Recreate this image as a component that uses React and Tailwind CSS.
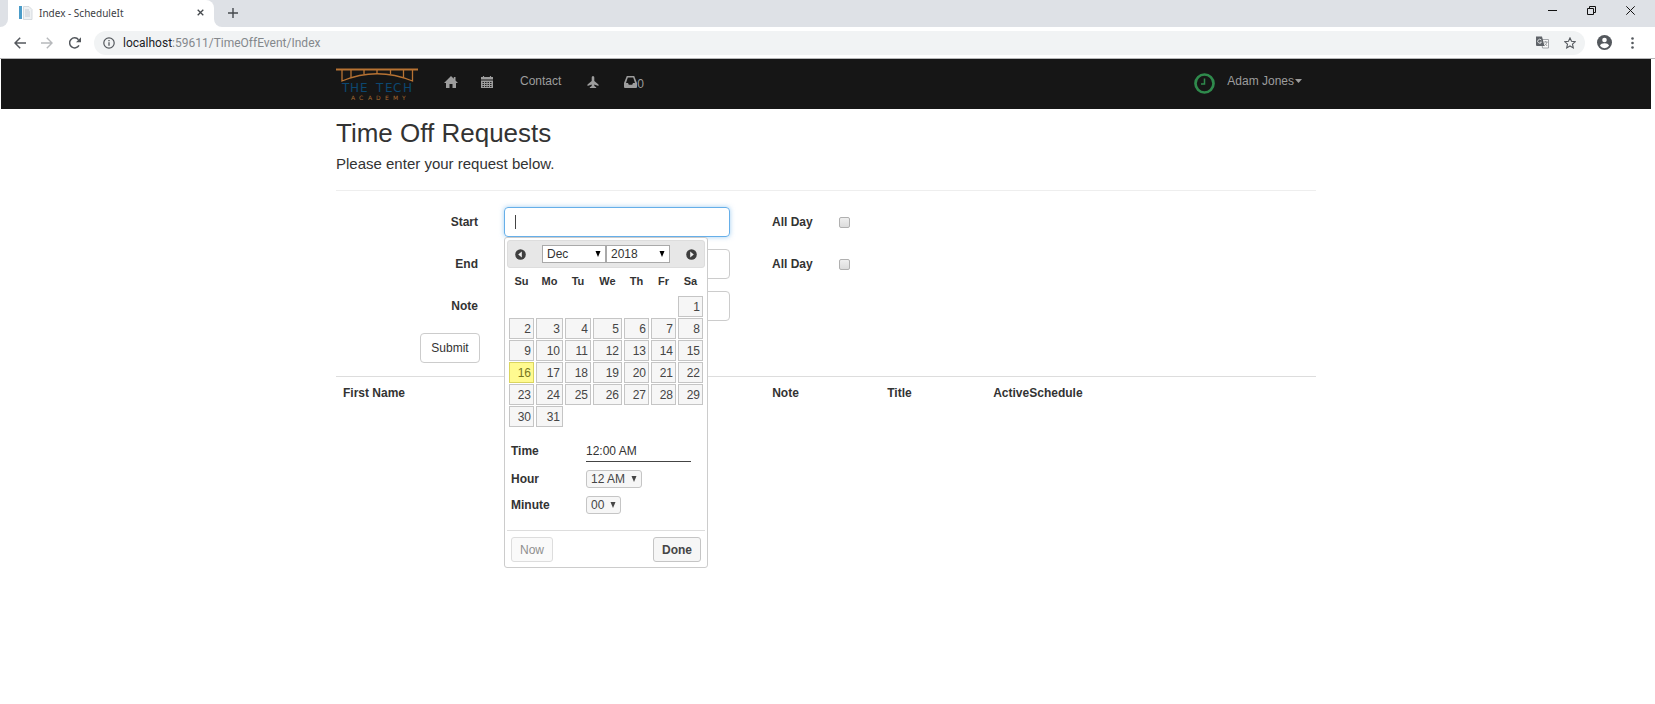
import React from "react";

const DAYS = ["Su", "Mo", "Tu", "We", "Th", "Fr", "Sa"];
const WEEKS = [
  [0, 0, 0, 0, 0, 0, 1],
  [2, 3, 4, 5, 6, 7, 8],
  [9, 10, 11, 12, 13, 14, 15],
  [16, 17, 18, 19, 20, 21, 22],
  [23, 24, 25, 26, 27, 28, 29],
  [30, 31, 0, 0, 0, 0, 0],
];

function Favicon() {
  return (
    <svg viewBox="0 0 14 14" className="size-[14px] shrink-0">
      <rect x="0" y="0" width="3" height="13" fill="#4a9cc9" />
      <path d="M4.5 0.5h5.5l3 3v10H4.5z" fill="#eef1f3" stroke="#cdd3d8" strokeWidth="0.8" />
      <path d="M6 4h4M6 6h5M6 8h5M6 10h5" stroke="#b8c2ca" strokeWidth="0.8" />
    </svg>
  );
}

function TabStrip() {
  return (
    <div className="flex h-[27px] bg-[#dee1e6] text-[#3c4043]">
      <div className="flex w-[8px] items-end bg-white">
        <div className="h-full w-full rounded-br-lg bg-[#dee1e6]" />
      </div>
      <div className="flex w-[206px] items-center rounded-tr-lg bg-white pr-[8px] pb-[2px] pl-[11px]">
        <Favicon />
        <span className="ml-[6px] grow whitespace-nowrap font-['Noto_Sans',sans-serif] text-[10px]">Index - ScheduleIt</span>
        <button type="button" aria-label="Close tab" className="flex size-[12px] items-center justify-center">
          <svg viewBox="0 0 8 8" className="size-[7px]" fill="none" stroke="#45494d" strokeWidth="1.5">
            <path d="M0.8 0.8l6.4 6.4M7.2 0.8L0.8 7.2" />
          </svg>
        </button>
      </div>
      <div className="flex w-[9px] items-end bg-white">
        <div className="h-full w-full rounded-bl-lg bg-[#dee1e6]" />
      </div>
      <button type="button" aria-label="New tab" className="ml-[5px] flex w-[10px] items-center justify-center pb-[2px]">
        <svg viewBox="0 0 10 10" className="size-[10px]" fill="none" stroke="#45494d" strokeWidth="1.4">
          <path d="M5 0v10M0 5h10" />
        </svg>
      </button>
      <div className="ml-auto flex gap-[30px] pr-[20px] pb-[7px]">
        <button type="button" aria-label="Minimize" className="flex items-center">
          <svg viewBox="0 0 9 9" className="size-[9px]" stroke="#111" strokeWidth="1">
            <path d="M0 4.5h9" />
          </svg>
        </button>
        <button type="button" aria-label="Restore" className="flex items-center">
          <svg viewBox="0 0 9 9" className="size-[9px]" fill="none" stroke="#111" strokeWidth="1">
            <path d="M0.5 2.5h6v6h-6zM2.5 2.5v-2h6v6h-2" />
          </svg>
        </button>
        <button type="button" aria-label="Close" className="flex items-center">
          <svg viewBox="0 0 9 9" className="size-[9px]" fill="none" stroke="#111" strokeWidth="1">
            <path d="M0.3 0.3l8.4 8.4M8.7 0.3L0.3 8.7" />
          </svg>
        </button>
      </div>
    </div>
  );
}

function Toolbar() {
  return (
    <div className="flex h-[32px] items-center border-b border-[#b5b5b7] bg-white pr-[21px] pl-[14px]">
      <button type="button" aria-label="Back">
        <svg viewBox="0 0 12 12" className="size-[12px]" fill="none" stroke="#54585d" strokeWidth="1.5">
          <path d="M12 6H1M6.2 0.8L1 6l5.2 5.2" />
        </svg>
      </button>
      <button type="button" aria-label="Forward" className="ml-[15px]">
        <svg viewBox="0 0 12 12" className="size-[12px]" fill="none" stroke="#b7b9bc" strokeWidth="1.4">
          <path d="M0 6h11M5.8 0.8L11 6l-5.2 5.2" />
        </svg>
      </button>
      <button type="button" aria-label="Reload" className="ml-[16px]">
        <svg viewBox="0 0 12 12" className="size-[12px]">
          <path d="M10 8.3A5 5 0 1 1 9.5 2.7" fill="none" stroke="#54585d" strokeWidth="1.5" />
          <path d="M12 0.2v5H7z" fill="#54585d" />
        </svg>
      </button>
      <div className="ml-[13px] flex h-[24px] grow items-center rounded-full bg-[#f1f3f4] pr-[9px] pl-[9px]">
        <svg viewBox="0 0 12 12" className="size-[12px] shrink-0" fill="none" stroke="#54585d">
          <circle cx="6" cy="6" r="5.2" strokeWidth="1.2" />
          <path d="M6 5.3v3.5M6 3v1.3" strokeWidth="1.3" />
        </svg>
        <p className="ml-[8px] grow font-[Roboto,sans-serif] text-[12px] leading-4 text-[#84888c]">
          <span className="text-[#202124]">localhost</span>:59611/TimeOffEvent/Index
        </p>
        <button type="button" aria-label="Translate this page">
          <svg viewBox="0 0 13 13" className="size-[13px]">
            <path d="M5.5 3.5h7v8.5h-6z" fill="#fafafa" stroke="#9a9da0" strokeWidth="0.9" />
            <path d="M0 0.5h6l2.5 9.5H1a1 1 0 0 1-1-1z" fill="#5f6368" />
            <path d="M5.3 4a2 2 0 1 0 0.2 2.2H3.8" fill="none" stroke="#e6e8ea" strokeWidth="0.9" />
            <path d="M7.7 6h4M9.7 5v1M11 6c-.4 2-1.8 3.2-2.8 3.8M8.8 7.5l2.4 2.5" fill="none" stroke="#84888c" strokeWidth="0.8" />
          </svg>
        </button>
        <button type="button" aria-label="Bookmark this page" className="ml-[15px]">
          <svg viewBox="0 0 12 12" className="size-[12px]" fill="none" stroke="#54585d" strokeWidth="1.1">
            <path d="M6 0.9l1.5 3.4 3.8.4-2.8 2.5.8 3.7L6 9l-3.3 1.9.8-3.7L.7 4.7l3.8-.4z" />
          </svg>
        </button>
      </div>
      <button type="button" aria-label="Profile" className="ml-[12px]">
        <svg viewBox="0 0 15 15" className="size-[15px]">
          <circle cx="7.5" cy="7.5" r="7.5" fill="#54585d" />
          <circle cx="7.5" cy="5" r="2.3" fill="#fff" />
          <path d="M3 10.8c0-1.7 2.8-2.5 4.5-2.5s4.5.8 4.5 2.5a5.5 5.5 0 0 1-9 0z" fill="#fff" />
        </svg>
      </button>
      <button type="button" aria-label="Menu" className="ml-[19px]">
        <svg viewBox="0 0 3 12" className="h-[12px] w-[3px]" fill="#54585d">
          <circle cx="1.5" cy="1.5" r="1.3" />
          <circle cx="1.5" cy="6" r="1.3" />
          <circle cx="1.5" cy="10.5" r="1.3" />
        </svg>
      </button>
    </div>
  );
}

function Logo() {
  return (
    <svg viewBox="0 0 82 33" className="h-[33px] w-[82px]" role="img" aria-label="The Tech Academy">
      <g fill="none" stroke="#b87333" strokeWidth="1.3">
        <path d="M0 1.5h82" strokeWidth="1.8" />
        <path d="M6 1.5v11.5Q41 -1.5 76.5 13V1.5" />
        <path d="M15 1.5v8M28 1.5v4.5M41 1.5v4M54.5 1.5v4.5M67.5 1.5v8" />
      </g>
      <text x="6 14 24 32 40 49 57 67" y="24" fill="#0c4770" className="font-['DejaVu_Sans',sans-serif] text-[12px]">THE TECH</text>
      <text x="15 23 32 40 49 57 66" y="32" fill="#a5682f" className="font-['DejaVu_Sans',sans-serif] text-[6px]">ACADEMY</text>
    </svg>
  );
}

function NavBar() {
  return (
    <nav className="bg-[#161616] text-[12px] leading-4 text-[#9d9d9d]">
      <div className="mx-auto flex h-[50px] max-w-[980px] items-start pt-[9px]">
        <a href="#" className="block">
          <Logo />
        </a>
        <a href="#" aria-label="Home" className="mt-[8px] ml-[26px]">
          <svg viewBox="0 0 14 12" className="h-[12px] w-[14px]" fill="#9d9d9d">
            <path d="M7 0L0 7h2v5h3.5V8h3v4H12V7h2L11.5 4.5V1H9.800v1.800z" />
          </svg>
        </a>
        <a href="#" aria-label="Calendar" className="mt-[8px] ml-[23px]">
          <svg viewBox="0 0 12 12" className="size-[12px]">
            <path d="M0 1h12v2.5H0zM0 4.5h12V12H0z" fill="#9d9d9d" />
            <path d="M2.5 0v2M9.5 0v2" stroke="#9d9d9d" strokeWidth="1.2" />
            <path d="M1.5 6.5h9M1.5 8.5h9M1.5 10.5h9" stroke="#161616" strokeWidth="0.9" strokeDasharray="1.5 1" />
          </svg>
        </a>
        <a href="#" className="mt-[5px] ml-[27px]">Contact</a>
        <a href="#" aria-label="Time off" className="mt-[8px] ml-[26px]">
          <svg viewBox="0 0 12 12" className="size-[12px]" fill="#9d9d9d">
            <path d="M6 0c.8 0 1.3.8 1.3 1.8V5L11.500 8.400V10L7.300 8.600V10L9.200 11.200V12H2.800v-.8L4.700 10V8.600L.5 10V8.400L4.700 5V1.800C4.700.8 5.200 0 6 0z" />
          </svg>
        </a>
        <a href="#" className="mt-[8px] ml-[25px] flex">
          <svg viewBox="0 0 13 12" className="h-[12px] w-[13px]" fill="#9d9d9d">
            <path fillRule="evenodd" d="M2.8 0h7.4L13 7v4a1 1 0 0 1-1 1H1a1 1 0 0 1-1-1V7zM3.800 1.600L2 7h2l.8 1.800h3.400L9 7h2L9.200 1.600z" />
          </svg>
          0
        </a>
        <svg viewBox="0 0 21 21" className="mt-[5px] ml-auto size-[21px]" fill="none" stroke="#2f8a4c">
          <circle cx="10.5" cy="10.5" r="9" strokeWidth="2.7" />
          <path d="M10.5 5.5V11H7" strokeWidth="1.5" />
        </svg>
        <a href="#" className="mt-[5px] mr-[14px] ml-[12px] flex items-center gap-[1px]">
          Adam Jones
          <svg viewBox="0 0 7 4" className="h-[4px] w-[7px]" fill="#9d9d9d">
            <path d="M0 0h7L3.5 4z" />
          </svg>
        </a>
      </div>
    </nav>
  );
}

function Select({ id, label, value, className, arrow }) {
  return (
    <span className="relative flex">
      <select id={id} aria-label={label} defaultValue={value} className={"appearance-none border " + className}>
        <option>{value}</option>
      </select>
      <svg viewBox="0 0 6 6" className={"pointer-events-none absolute top-[6px] right-[5px] size-[6px] " + arrow}>
        <path d="M0.5 0h5L3 6z" fill="currentColor" />
      </svg>
    </span>
  );
}

function ArrowButton({ label, d }) {
  return (
    <button type="button" aria-label={label} className="size-[11px]">
      <svg viewBox="0 0 11 11" className="size-[11px]">
        <circle cx="5.5" cy="5.5" r="5.3" fill="#3f3f3f" />
        <path d={d} fill="#f0f0f0" />
      </svg>
    </button>
  );
}

function DatePicker() {
  return (
    <div className="absolute top-full left-0 z-10 w-[204px] rounded-[3px] border border-[#ccc] bg-white p-[2px] text-[12px] leading-4 text-[#333]">
      <div className="flex h-[28px] items-center rounded-[3px] border border-[#ddd] bg-[#e7e7e7] px-[7px]">
        <ArrowButton label="Previous month" d="M6.8 2.5v6L3.2 5.5z" />
        <div className="flex grow justify-center">
          <Select label="Month" value="Dec" className="h-[18px] w-[64px] border-[#a9a9a9] bg-white pl-[4px] text-[12px]" arrow="text-black" />
          <Select label="Year" value="2018" className="h-[18px] w-[64px] border-[#a9a9a9] bg-white pl-[4px] text-[12px]" arrow="text-black" />
        </div>
        <ArrowButton label="Next month" d="M4.2 2.5v6L7.8 5.5z" />
      </div>
      <table className="w-full table-fixed border-separate border-spacing-x-[2px] border-spacing-y-[1px]">
        <colgroup>
          <col className="w-[25px]" />
          <col className="w-[27px]" />
          <col className="w-[26px]" />
          <col className="w-[29px]" />
          <col className="w-[25px]" />
          <col className="w-[25px]" />
          <col />
        </colgroup>
        <thead>
          <tr>
            {DAYS.map((d) => (
              <th key={d} className="h-[26px] p-0 pb-[2px] text-center text-[11px] font-bold">{d}</th>
            ))}
          </tr>
        </thead>
        <tbody>
          {WEEKS.map((week, i) => (
            <tr key={i}>
              {week.map((n, j) => (
                <td key={j} className="h-[21px] p-0">
                  {n > 0 && (
                    <button
                      type="button"
                      className={
                        n === 16
                          ? "block h-[21px] w-full border border-[#dad55e] bg-[#fffa90] pr-[2px] text-right text-[12px] text-[#777620]"
                          : "block h-[21px] w-full border border-[#c5c5c5] bg-[#f6f6f6] pr-[2px] text-right text-[12px] text-[#454545]"
                      }
                    >
                      {n}
                    </button>
                  )}
                </td>
              ))}
            </tr>
          ))}
        </tbody>
      </table>
      <div className="grid grid-cols-[75px_1fr] items-center px-[4px] pt-[12px] pb-[16px]">
        <label htmlFor="time" className="font-bold">Time</label>
        <input id="time" defaultValue="12:00 AM" className="mr-[10px] h-[22px] min-w-0 border-b border-[#444] text-[12px]" />
        <label htmlFor="hour" className="mt-[8px] font-bold">Hour</label>
        <div className="mt-[8px] flex">
          <Select id="hour" value="12 AM" className="h-[18px] w-[56px] rounded-[3px] border-[#c5c5c5] bg-[#f6f6f6] pl-[4px] text-[12px] text-[#454545]" arrow="text-[#454545]" />
        </div>
        <label htmlFor="minute" className="mt-[8px] font-bold">Minute</label>
        <div className="mt-[8px] flex">
          <Select id="minute" value="00" className="h-[18px] w-[35px] rounded-[3px] border-[#c5c5c5] bg-[#f6f6f6] pl-[4px] text-[12px] text-[#454545]" arrow="text-[#454545]" />
        </div>
      </div>
      <div className="flex justify-between border-t border-[#ddd] px-[4px] pt-[6px] pb-[3px]">
        <button type="button" className="h-[25px] rounded-[3px] border border-[#ddd] bg-[#fafafa] px-[8px] text-[#8f8f8f]">Now</button>
        <button type="button" className="h-[25px] rounded-[3px] border border-[#c5c5c5] bg-[#f6f6f6] px-[8px] font-bold text-[#454545]">Done</button>
      </div>
    </div>
  );
}

function AllDay({ id }) {
  return (
    <div className="flex items-center gap-[26px]">
      <label htmlFor={id} className="font-bold whitespace-nowrap">All Day</label>
      <input id={id} type="checkbox" className="size-[11px] appearance-none rounded-[2px] border border-[#b0b0b0] bg-linear-to-b from-[#efefef] to-[#dcdcdc]" />
    </div>
  );
}

const FIELD = "block h-[30px] w-full rounded-[4px] border px-[11px] text-[12px]";
const ROW = "grid h-[30px] grid-cols-[142px_26px_226px_42px_auto] items-center justify-start";

function RequestForm() {
  return (
    <form className="flex flex-col gap-[12px] pt-[16px]">
      <div className={ROW}>
        <label htmlFor="start" className="text-right font-bold">Start</label>
        <div className="relative col-start-3">
          <input id="start" className={FIELD + " border-[#66afe9] shadow-[0_0_5px_rgba(102,175,233,0.6)]"} />
          <span className="absolute top-[8px] left-[11px] h-[14px] w-px bg-[#444]" />
          <DatePicker />
        </div>
        <div className="col-start-5"><AllDay id="start-all-day" /></div>
      </div>
      <div className={ROW}>
        <label htmlFor="end" className="text-right font-bold">End</label>
        <input id="end" className={FIELD + " col-start-3 border-[#ccc]"} />
        <div className="col-start-5"><AllDay id="end-all-day" /></div>
      </div>
      <div className={ROW}>
        <label htmlFor="note" className="text-right font-bold">Note</label>
        <input id="note" className={FIELD + " col-start-3 border-[#ccc]"} />
      </div>
      <div className="pl-[84px]">
        <button type="submit" className="h-[30px] w-[60px] rounded-[4px] border border-[#ccc] bg-white text-[12px]">Submit</button>
      </div>
    </form>
  );
}

export default function App() {
  return (
    <div className="min-h-screen bg-white font-['Liberation_Sans',Arial,sans-serif] text-[12px] leading-4 text-[#333]">
      <TabStrip />
      <Toolbar />
      <div className="mr-[4px] ml-[1px]">
        <NavBar />
        <main className="mx-auto max-w-[980px]">
          <h2 className="pt-[8px] text-[26px] leading-8">Time Off Requests</h2>
          <p className="border-b border-[#eee] pt-[5px] pb-[16px] text-[15px] leading-5">Please enter your request below.</p>
          <RequestForm />
          <table className="mt-[13px] w-full table-fixed border-separate border-spacing-0 border-t border-[#ddd] text-left">
            <thead>
              <tr>
                <th className="w-[17%] px-[7px] py-[8px]">First Name</th>
                <th className="w-[27%]" />
                <th className="w-[115px] px-[5px]">Note</th>
                <th className="w-[106px] px-[5px]">Title</th>
                <th className="px-[5px]">ActiveSchedule</th>
              </tr>
            </thead>
          </table>
        </main>
      </div>
    </div>
  );
}
